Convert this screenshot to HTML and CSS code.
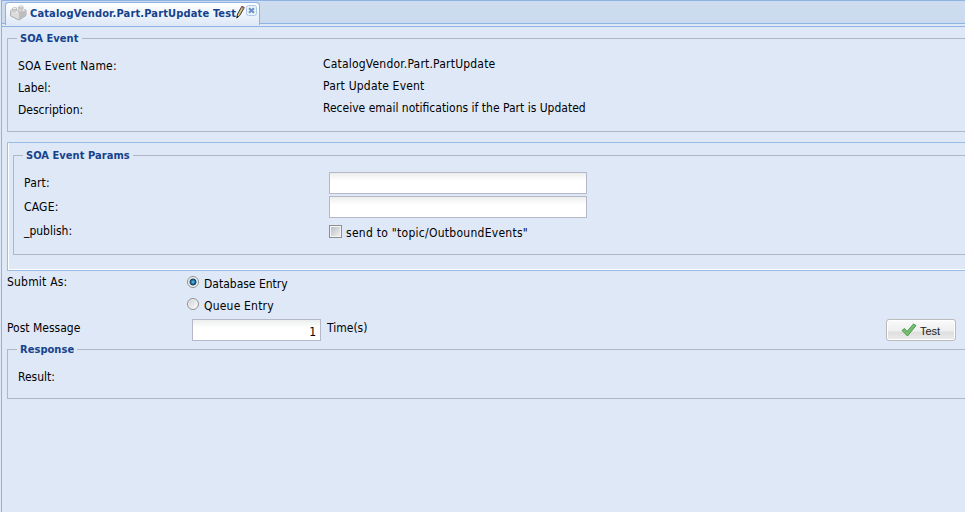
FILE: index.html
```html
<!DOCTYPE html>
<html lang="en">
<head>
<meta charset="utf-8">
<title>CatalogVendor.Part.PartUpdate Test</title>
<link rel="stylesheet" href="styles.css">
</head>
<body>
<div class="app">
  <header class="tabstrip">
    <div class="tab">
      <svg class="brick" width="17" height="16" viewBox="0 0 17 16">
        <path d="M.7 5.500 7 3l9 2v5.500L9 15 .7 11z" fill="#dcdcdc" stroke="#aaa"/>
        <path d="m1 5.500 8 3L16 5 7 2.500z" fill="#efefef"/>
        <path d="m9 8.500 7-3.500v5.500L9 15z" fill="#bdbdbd"/>
        <path d="M2.500 3.500v2c0 1.200 4 1.200 4 0v-2M9 1.800v1.700c0 1.200 4 1.200 4 0V1.800M8 5v1.800c0 1.200 4 1.200 4 0V5" fill="#d6d6d6" stroke="#aaa" stroke-width=".7"/>
        <ellipse cx="4.500" cy="3.500" rx="2" ry="1" fill="#f5f5f5" stroke="#aaa" stroke-width=".6"/>
        <ellipse cx="11" cy="1.800" rx="2" ry="1" fill="#f5f5f5" stroke="#aaa" stroke-width=".6"/>
        <ellipse cx="10" cy="5" rx="2" ry="1" fill="#f5f5f5" stroke="#aaa" stroke-width=".6"/>
      </svg>
      <span class="tab-title">CatalogVendor.Part.PartUpdate Test</span>
      <svg class="pencil" width="9" height="14" viewBox="0 0 9 14">
        <path d="m.8 13 .7-4L6 1.200 8.300 2.600 3.700 10.500z" fill="#d9c37e" stroke="#3c3a35"/>
        <path d="m6 1 2.500 1.500-1 1.500L5 2.600z" fill="#a5685f"/>
        <path d="m.5 13.500.6-2.700 1.600 1z" fill="#222"/>
      </svg>
      <svg class="close" width="11" height="11" viewBox="0 0 11 11">
        <rect x=".5" y=".5" width="10" height="10" rx="2" fill="#e9f2fd" stroke="#a9c8f0"/>
        <path d="m3 3.300 5 4.400M8 3.300 3 7.700" stroke="#6b8fc4" stroke-width="2"/>
      </svg>
    </div>
  </header>
  <main class="content">
    <section class="group event">
      <h2 class="legend"><span>SOA Event</span></h2>
      <div class="row"><span class="label wide">SOA Event Name:</span><span class="value wide">CatalogVendor.Part.PartUpdate</span></div>
      <div class="row"><span class="label">Label:</span><span class="value wide">Part Update Event</span></div>
      <div class="row"><span class="label">Description:</span><span class="value">Receive email notifications if the Part is Updated</span></div>
    </section>
    <section class="panel">
      <div class="group params">
        <h2 class="legend"><span>SOA Event Params</span></h2>
        <div class="row"><span class="label wide">Part:</span><input class="field" type="text"></div>
        <div class="row"><span class="label wide">CAGE:</span><input class="field" type="text"></div>
        <div class="row"><span class="label">_publish:</span><label class="check"><i class="box"></i><span>send to "topic/OutboundEvents"</span></label></div>
      </div>
    </section>
    <div class="submit">
      <span class="submit-label wide">Submit As:</span>
      <div class="options">
        <label class="option"><i class="radio on"></i><span>Database Entry</span></label>
        <label class="option"><i class="radio"></i><span class="wide">Queue Entry</span></label>
      </div>
    </div>
    <div class="post">
      <span class="post-label">Post Message</span>
      <input class="field count" type="text" value="1">
      <span class="times">Time(s)</span>
      <button class="test">
        <svg width="16" height="14" viewBox="0 0 16 14"><path d="m1 7.500 2.500-2 2.500 3L12.500 1l2.500 1.500L6.500 13z" fill="#75be70" stroke="#4d9b52" stroke-linejoin="round"/></svg>
        <span>Test</span>
      </button>
    </div>
    <section class="group response">
      <h2 class="legend"><span>Response</span></h2>
      <div class="row"><span class="label">Result:</span></div>
    </section>
  </main>
</div>
</body>
</html>
```
FILE: styles.css
```css
* { box-sizing: border-box; }
body {
  margin: 0;
  overflow: hidden;
  background: #dfe8f6;
  color: #000;
  font: 12px/16px Tahoma, "DejaVu Sans Condensed", "DejaVu Sans", sans-serif;
  font-stretch: condensed;
  letter-spacing: 0;
}
.wide { letter-spacing: 0.2px; }
.app {
  height: 512px;
  margin-left: 1px;
  border-left: 1px solid #8db2e3;
  border-top: 1px solid #8db2e3;
}
.tabstrip {
  height: 26px;
  padding: 1px 0 0 3px;
  background: linear-gradient(#cddcee, #cbdbef 22px, #8db2e3 22px, #8db2e3 23px, #dfe8f6 23px, #dfe8f6 25px, #8db2e3 25px);
}
.tab {
  display: flex;
  width: 255px;
  height: 23px;
  padding-left: 4px;
  border: 1px solid #8db2e3;
  border-bottom: 0;
  border-radius: 4px 4px 0 0;
  background: linear-gradient(#fff, #eaf2fc 60%, #dfe8f6);
}
.brick { margin-top: 2px; }
.tab-title {
  width: 206px;
  margin: 3px 0 0 3px;
  color: #15428b;
  font-size: 11px;
  font-weight: bold;
  letter-spacing: 0.15px;
  white-space: nowrap;
}
.pencil { margin-top: 2px; }
.close { margin: 2px 0 0 1px; }
.content { padding: 12px 0 0 5px; width: 1000px; }
.group { border: 1px solid #b0b6c8; }
.legend {
  height: 16px;
  margin: -8px 0 0 9px;
  color: #15428b;
  font-size: 11px;
  font-weight: bold;
  letter-spacing: 0.05px;
}
.legend span { display: inline-block; padding: 0 3px; background: #dfe8f6; }
.row { display: flex; white-space: nowrap; }
.label { flex: none; }
.event { height: 94px; margin-top: -1px; }
.event .legend { margin-bottom: 11px; }
.event .row { height: 22px; padding-left: 10px; }
.event .label { width: 305px; }
.value { margin-top: -2px; }
.panel {
  height: 129px;
  margin-top: 10px;
  padding: 12px 4px 0 5px;
  border: 1px solid #99bbe8;
  box-shadow: inset 1px 0 #fff, inset 0 -1px #fff;
}
.params { height: 100px; }
.params .legend { margin-bottom: 7px; }
.params .row { height: 24px; padding-left: 10px; }
.params .label { width: 305px; padding-top: 4px; }
.field {
  width: 258px;
  height: 22px;
  margin: 1px 0 0;
  padding: 2px 4px 0;
  border: 1px solid #b5b8c8;
  outline: 0;
  background: linear-gradient(#eceeee, #fff 8px);
  color: #000;
  font: inherit;
}
.check { display: flex; padding-top: 6px; }
.check .box {
  width: 13px;
  height: 13px;
  border: 1px solid #8e8f8f;
  background: linear-gradient(135deg, #b5bac2, #f5f5f5);
  box-shadow: inset 0 0 0 1px #f4f4f4;
}
.check span { margin-left: 4px; letter-spacing: 0.27px; }
.submit { display: flex; height: 48px; padding-top: 3px; }
.submit-label { width: 180px; }
.option { display: flex; height: 22px; }
.radio {
  width: 12px;
  height: 12px;
  margin-top: 2px;
  border: 1px solid #8e8f8f;
  border-radius: 50%;
  background: linear-gradient(135deg, #c9ced6, #fff);
  box-shadow: inset 0 0 0 1px #f4f4f4;
}
.radio.on { background: radial-gradient(circle at 5px 5px, #76d1f3 0, #2784b5 1.500px, #133e60 3px, #f4f4f4 4px); }
.option span { margin: 2px 0 0 5px; }
.post { display: flex; width: 949px; height: 30px; }
.post-label { width: 185px; padding-top: 1px; }
.count { width: 129px; margin-top: 0; padding-top: 3px; text-align: right; }
.times { margin: 1px 0 0 6px; }
.test {
  display: flex;
  width: 70px;
  height: 22px;
  margin: 0 0 0 auto;
  padding: 3px 0 0 14px;
  border: 1px solid #bbb;
  border-radius: 3px;
  background: linear-gradient(#fafafa, #efefef 55%, #dedede 60%, #ebebeb);
  box-shadow: inset 0 0 0 1px #fff;
  color: #222;
  font: 11px/14px "Liberation Sans", Arial, sans-serif;
}
.test span { margin: 1px 0 0 3px; }
.response { height: 50px; }
.response .legend { margin-bottom: 11px; }
.response .row { padding-left: 10px; }
```
